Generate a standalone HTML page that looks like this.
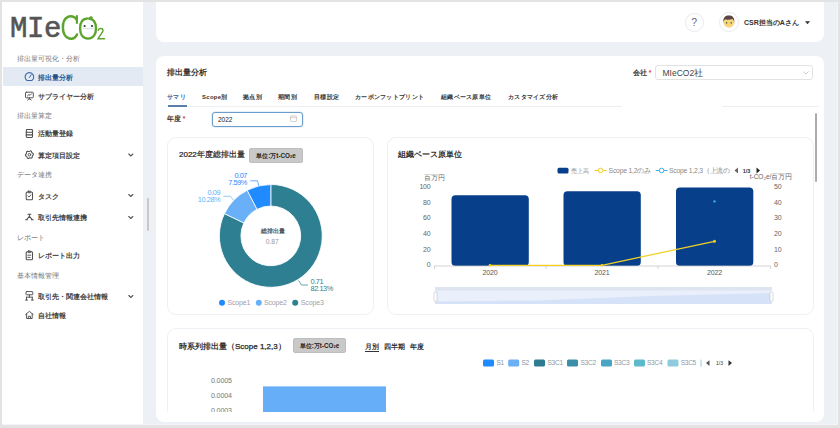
<!DOCTYPE html>
<html><head><meta charset="utf-8">
<style>
*{margin:0;padding:0;box-sizing:border-box}
html,body{width:840px;height:428px;overflow:hidden;background:#edf0f5;font-family:"Liberation Sans",sans-serif;color:#333;position:relative}
.a{position:absolute;white-space:nowrap}
.b{position:absolute}
.sec{position:absolute;left:17px;font-size:6.5px;color:#777;line-height:8px;white-space:nowrap}
.it{position:absolute;left:38px;font-size:7px;color:#444;font-weight:bold;line-height:9px;white-space:nowrap}
.tab{position:absolute;top:92px;font-size:6px;letter-spacing:0.28px;font-weight:bold;color:#333;line-height:8px;white-space:nowrap}
.card{position:absolute;background:#fff;border-radius:8px}
.sub{position:absolute;background:#fff;border:1px solid #eff0f5;border-radius:9px}
.yl{position:absolute;font-size:6.5px;color:#666;line-height:8px;text-align:right;width:30px}
.yr{position:absolute;font-size:6.5px;color:#666;line-height:8px}
.xl{position:absolute;font-size:6.5px;color:#555;line-height:8px;width:30px;text-align:center}
.badge{position:absolute;background:#c9c9c9;border:1px solid #bdbdbd;border-radius:2px;font-size:6.3px;letter-spacing:0px;font-weight:bold;color:#222;line-height:13px;text-align:center;white-space:nowrap}
.lg{position:absolute;font-size:6px;color:#8a9aa8;line-height:8px;white-space:nowrap}
.lr{position:absolute;width:11px;height:7px;border-radius:2px}
</style></head><body>
<!-- sidebar -->
<div class="b" style="left:0;top:0;width:143px;height:428px;background:#fff"></div>
<div class="a" id="logoM" style="left:10px;top:15px;font-family:'Liberation Mono',monospace;font-size:29px;font-weight:normal;-webkit-text-stroke:0.6px #555;color:#555;letter-spacing:-0.4px;line-height:29px">MIe</div>
<svg class="b" style="left:55px;top:10px" width="55" height="34" viewBox="55 10 55 34" fill="none" stroke="#5ea52f" stroke-linecap="round">
  <path d="M76.6 19.5 C74.5 16.3 70.5 15.6 67.5 17.2 C63.8 19.2 62.8 24 62.9 27.8 C63 32.5 64.5 36.8 68.8 38.3 C72.3 39.4 75.5 37.8 77 34.5" stroke-width="2.5"/>
  <path d="M76.9 16 V23" stroke-width="2.2"/>
  <path d="M87 18.5 C82 18.8 80 23.5 80.1 28.8 C80.2 34 82.5 38.6 88 38.6 C93.8 38.6 96 33.6 96 28.3 C96 22.5 93.5 18.3 88.5 18.8 C89.5 18.3 90.8 17.6 91.5 17.5" stroke-width="2.4"/>
  <circle cx="84.6" cy="26" r="1.1" fill="#1f4a2a" stroke="none"/>
  <circle cx="92" cy="26" r="1.1" fill="#1f4a2a" stroke="none"/>
  <path d="M83 28.3 Q84.5 29.3 86 28.3 M86.5 28.3 Q88.3 29.5 90 28.3 M90.5 28.3 Q92 29.3 93.5 28.3" stroke="#9bbfa8" stroke-width="0.5"/>
  <path d="M98.2 30.3 C98.5 28 102.8 27.6 103 30.2 C103.2 32.2 100.5 34.5 98 38.8 H104.5" stroke-width="1.5"/>
</svg>
<svg class="b" style="left:0;top:0;z-index:2" width="143" height="428" viewBox="0 0 143 428" fill="none" stroke="#505050" stroke-width="0.95" stroke-linecap="round" stroke-linejoin="round">
  <!-- gauge -->
  <path d="M27 80.5 A4.3 4.3 0 1 1 31.8 80.5 Z" stroke="#3b6aa6" stroke-width="1.1"/>
  <path d="M29.4 77.5 L31.2 74.8" stroke="#3b6aa6" stroke-width="1"/>
  <!-- presentation -->
  <rect x="25.5" y="92.2" width="7.8" height="5.6" rx="0.8"/>
  <path d="M27.4 96 L29 94.5 L30 95.3 L31.5 93.8"/>
  <path d="M29.4 97.8 V99.2 M27.6 100 L29.4 98.6 L31.2 100"/>
  <!-- doc list -->
  <rect x="26.3" y="129.5" width="6.2" height="8" rx="0.9" stroke-width="1.1"/>
  <path d="M26.3 132.2 H32.5 M26.3 134.9 H32.5" stroke-width="1.1"/>
  <!-- gear -->
  <path d="M33.27 153.67 L33.40 154.71 L32.59 155.56 L32.25 156.36 L32.22 157.53 L31.39 158.17 L30.25 157.89 L29.39 158.00 L28.36 158.56 L27.39 158.16 L27.06 157.03 L26.54 156.34 L25.53 155.73 L25.40 154.69 L26.21 153.84 L26.55 153.04 L26.58 151.87 L27.41 151.23 L28.55 151.51 L29.41 151.40 L30.44 150.84 L31.41 151.24 L31.74 152.37 L32.26 153.06Z" stroke-width="1.05"/>
  <circle cx="29.4" cy="154.7" r="1.3"/>
  <!-- clipboard check -->
  <rect x="26.2" y="192" width="6.3" height="7.8" rx="1" stroke-width="1.05"/>
  <rect x="27.9" y="191.2" width="2.9" height="1.6" rx="0.5"/>
  <path d="M27.8 196 L29 197.1 L30.9 194.9"/>
  <!-- network -->
  <path d="M27.9 214.3 H30.9 M29.4 214.3 V216.4 L26.6 219.6 M29.4 216.4 L32.2 219.6 M25.6 219.7 H27.4 M31.4 219.7 H33.2" stroke-width="1.05"/>
  <!-- report clipboard -->
  <rect x="26.2" y="251.8" width="6.3" height="8" rx="1" stroke-width="1.05"/>
  <rect x="27.9" y="251" width="2.9" height="1.6" rx="0.5"/>
  <path d="M27.8 255.2 H30.8 M27.8 257.4 H30"/>
  <!-- org -->
  <rect x="26" y="291.6" width="6.8" height="3.2" rx="0.5"/>
  <path d="M29.4 294.8 V297.2 M26.5 297.2 H32.3 M26.5 297.2 V300 M32.3 297.2 V300 M25.5 300 H27.5 M31.3 300 H33.3"/>
  <!-- house -->
  <path d="M25.6 314.6 L29.4 311.3 L33.2 314.6 M26.6 313.8 V318.5 H32.2 V313.8"/>
  <path d="M28.3 318.5 V316.3 H30.5 V318.5"/>
  <!-- chevrons -->
  <path d="M128.8 154 L130.8 156 L132.8 154 M128.8 194.5 L130.8 196.5 L132.8 194.5 M128.8 216.5 L130.8 218.5 L132.8 216.5 M128.8 295.5 L130.8 297.5 L132.8 295.5" stroke="#555" stroke-width="1.1"/>
</svg>
<div class="sec" style="top:55px">排出量可視化・分析</div>
<div class="b" style="left:3px;top:67px;width:140px;height:19px;background:#e4eaf3"></div>
<div class="it" style="top:73px;color:#24508c">排出量分析</div>
<div class="it" style="top:92px">サプライヤー分析</div>
<div class="sec" style="top:112px">排出量算定</div>
<div class="it" style="top:129px">活動量登録</div>
<div class="it" style="top:151px">算定項目設定</div>
<div class="sec" style="top:171px">データ連携</div>
<div class="it" style="top:192px">タスク</div>
<div class="it" style="top:213px">取引先情報連携</div>
<div class="sec" style="top:234px">レポート</div>
<div class="it" style="top:251px">レポート出力</div>
<div class="sec" style="top:272px">基本情報管理</div>
<div class="it" style="top:292px">取引先・関連会社情報</div>
<div class="it" style="top:311px">自社情報</div>
<div class="b" style="left:147px;top:198px;width:2px;height:33px;background:#c8c8c8;border-radius:1px"></div>

<!-- header -->
<div class="card" style="left:156px;top:-8px;width:668px;height:50px"></div>
<div class="b" style="left:685px;top:12.5px;width:19px;height:19px;border:1px solid #ebebef;border-radius:50%;background:#fff"></div>
<div class="a" style="left:691.2px;top:16px;font-size:10.5px;color:#6a6a6a;line-height:12px">?</div>
<div class="b" style="left:719px;top:12px;width:19.5px;height:19.5px;border:1px solid #ebebef;border-radius:50%;background:#fff"></div>
<svg class="a" style="left:722px;top:15px" width="14" height="14" viewBox="722 15 14 14">
  <ellipse cx="728.9" cy="22.3" rx="5.6" ry="5.4" fill="#f7d57a"/>
  <path d="M723.4 22 C723 17.5 725.5 15.6 728.8 15.6 C732.3 15.6 734.6 17.5 734.3 22 C733.8 20.5 733.3 19.6 732.3 19 C730 20 727 20 725.2 19.2 C724.3 19.8 723.8 20.8 723.4 22Z" fill="#5b4546"/>
  <ellipse cx="726.6" cy="22.8" rx="0.7" ry="0.9" fill="#4a5a50"/><ellipse cx="731.2" cy="22.8" rx="0.7" ry="0.9" fill="#4a5a50"/>
</svg>
<div class="a" style="left:744px;top:18px;font-size:7px;font-weight:bold;color:#333;line-height:10px">CSR担当のAさん</div>
<svg class="a" style="left:805px;top:21px" width="5" height="4" viewBox="0 0 5 4"><path d="M0 0.3H5L2.5 3.2Z" fill="#333"/></svg>

<!-- main card -->
<div class="card" style="left:156px;top:56px;width:668px;height:366px"></div>
<div class="a" style="left:167px;top:68px;font-size:8px;font-weight:bold;color:#333;line-height:10px">排出量分析</div>
<div class="a" style="left:633px;top:69px;font-size:6.5px;font-weight:bold;color:#333;line-height:8px">会社<span style="color:#e0343a"> *</span></div>
<div class="b" style="left:655px;top:65px;width:158px;height:15px;border:1px solid #e2e2e2;border-radius:3px;background:#fff"></div>
<div class="a" style="left:662.5px;top:68px;font-size:8.5px;color:#444;line-height:10px">MIeCO2社</div>
<svg class="a" style="left:803px;top:71px" width="6" height="4" viewBox="0 0 6 4"><path d="M0.5 0.5L3 3L5.5 0.5" fill="none" stroke="#bbb" stroke-width="0.8"/></svg>

<!-- tabs -->
<div class="b" style="left:167px;top:105.5px;width:454.5px;height:1px;background:#eeeff2"></div><div class="b" style="left:722px;top:105.5px;width:97px;height:1px;background:#eeeff2"></div>
<div class="tab" style="left:167px;top:93px;color:#2a5a9a">サマリ</div>
<div class="b" style="left:167.5px;top:104.5px;width:19px;height:2px;background:#5b7fa8"></div>
<div class="tab" style="left:202px;top:93px">Scope別</div>
<div class="tab" style="left:243px;top:93px">拠点別</div>
<div class="tab" style="left:278px;top:93px">期間別</div>
<div class="tab" style="left:314px;top:93px">目標設定</div>
<div class="tab" style="left:355px;top:93px">カーボンフットプリント</div>
<div class="tab" style="left:441px;top:93px">組織ベース原単位</div>
<div class="tab" style="left:508px;top:93px">カスタマイズ分析</div>

<div class="a" style="left:167px;top:115px;font-size:6.5px;font-weight:bold;color:#333;line-height:8px">年度<span style="color:#e0343a"> *</span></div>
<div class="b" style="left:212px;top:112px;width:91px;height:15px;border:1px solid #6a9ccc;border-radius:3px;background:#fff;box-shadow:0 0 0 0.6px #d6e6f4"></div>
<div class="a" style="left:218px;top:115px;font-size:6.5px;color:#222;line-height:9px">2022</div>
<svg class="a" style="left:290px;top:115px" width="7" height="7" viewBox="0 0 7 7"><rect x="0.5" y="1" width="6" height="5.5" rx="0.8" fill="none" stroke="#bbb" stroke-width="0.7"/><line x1="0.5" y1="2.6" x2="6.5" y2="2.6" stroke="#bbb" stroke-width="0.6"/></svg>

<!-- donut card -->
<div class="sub" style="left:167px;top:137px;width:207px;height:178px"></div>
<div class="a" style="left:179px;top:150px;font-size:8px;color:#222;-webkit-text-stroke:0.2px #222;line-height:10px">2022年度総排出量</div>
<div class="badge" style="left:249px;top:148px;width:54px;height:15px">単位:万t-CO<sub style="font-size:4px;vertical-align:0">2</sub>e</div>

<!-- right chart card -->
<div class="sub" style="left:387px;top:137px;width:427px;height:178px"></div>
<div class="a" style="left:398px;top:150px;font-size:8px;font-weight:bold;color:#333;line-height:10px">組織ベース原単位</div>

<!-- bottom card -->
<div class="b" style="left:167px;top:328px;width:647px;height:84.2px;overflow:hidden">
  <div class="sub" style="left:0;top:0;width:647px;height:120px"></div>
</div>
<div class="a" style="left:179px;top:341.5px;font-size:8px;font-weight:bold;color:#333;line-height:10px">時系列排出量<span style="font-weight:normal;color:#222;-webkit-text-stroke:0.25px #222">（Scope 1,2,3）</span></div>
<div class="badge" style="left:293px;top:338px;width:53px;height:15px">単位:万t-CO<sub style="font-size:4px;vertical-align:0">2</sub>e</div>

<!-- charts overlay -->
<svg class="b" style="left:0;top:0" width="840" height="428" viewBox="0 0 840 428" font-family="Liberation Sans, sans-serif">
  <!-- donut -->
  <path d="M270.80 184.50A51.4 51.4 0 1 1 224.47 213.64L243.85 222.95A29.9 29.9 0 1 0 270.80 206.00Z" fill="#2f7f93" stroke="#fff" stroke-width="0.8" stroke-linejoin="round"/>
  <path d="M224.47 213.64A51.4 51.4 0 0 1 247.21 190.23L257.08 209.34A29.9 29.9 0 0 0 243.85 222.95Z" fill="#6ab0f9" stroke="#fff" stroke-width="0.8" stroke-linejoin="round"/>
  <path d="M247.21 190.23A51.4 51.4 0 0 1 270.80 184.50L270.80 206.00A29.9 29.9 0 0 0 257.08 209.34Z" fill="#1f8bff" stroke="#fff" stroke-width="0.8" stroke-linejoin="round"/>
  <polyline points="258.7,185.8 257.6,180.8 250.3,180.8" fill="none" stroke="#1f8bff" stroke-width="0.7"/>
  <polyline points="233.5,200 230.3,196.3 223.4,196.3" fill="none" stroke="#6ab0f9" stroke-width="0.7"/>
  <polyline points="298.5,280.3 301.5,285 308,285" fill="none" stroke="#2f7f93" stroke-width="0.7"/>
  <g font-size="7.4" text-anchor="end" letter-spacing="-0.45">
    <text x="247" y="178.2" fill="#1f8bff">0.07</text>
    <text x="247" y="185.2" fill="#1f8bff">7.59%</text>
    <text x="220.2" y="194.5" fill="#6ab0f9">0.09</text>
    <text x="220.2" y="201.5" fill="#6ab0f9">10.28%</text>
  </g>
  <g font-size="7.4" letter-spacing="-0.45">
    <text x="310.5" y="284" fill="#2f7f93">0.71</text>
    <text x="310.5" y="290.8" fill="#2f7f93">82.13%</text>
  </g>
  <text x="272.5" y="233" font-size="6.4" font-weight="bold" fill="#555" text-anchor="middle">総排出量</text>
  <text x="272.3" y="243.8" font-size="6.8" fill="#999" text-anchor="middle">0.87</text>
  <!-- donut legend -->
  <circle cx="222" cy="302.7" r="3" fill="#1f8bff"/>
  <circle cx="258.8" cy="302.7" r="3" fill="#6ab0f9"/>
  <circle cx="295.2" cy="302.7" r="3" fill="#2f7f93"/>
  <g font-size="7" fill="#a0a0a6" letter-spacing="-0.15">
    <text x="227.5" y="305.2">Scope1</text>
    <text x="264" y="305.2">Scope2</text>
    <text x="300.8" y="305.2">Scope3</text>
  </g>

  <!-- bar chart -->
  <g font-size="7" fill="#666" text-anchor="end" letter-spacing="-0.2">
    <text x="430.5" y="189.2">100</text>
    <text x="430.5" y="204.8">80</text>
    <text x="430.5" y="220.4">60</text>
    <text x="430.5" y="236">40</text>
    <text x="430.5" y="251.6">20</text>
    <text x="430.5" y="267.3">0</text>
  </g>
  <text x="434" y="180" font-size="6.6" fill="#6a6a6a" text-anchor="middle">百万円</text>
  <g font-size="7" fill="#666" letter-spacing="-0.2">
    <text x="774" y="189.2">50</text>
    <text x="774" y="204.8">40</text>
    <text x="774" y="220.4">30</text>
    <text x="774" y="236">20</text>
    <text x="774" y="251.6">10</text>
    <text x="774" y="267.3">0</text>
  </g>
  <text x="771" y="179" font-size="6.5" fill="#666" text-anchor="middle">t-CO₂e/百万円</text>
  <rect x="451.5" y="195.2" width="77.3" height="70.8" rx="4" fill="#083f8a"/>
  <rect x="563.5" y="191.3" width="77.3" height="74.7" rx="4" fill="#083f8a"/>
  <rect x="676" y="187.6" width="77.3" height="78.4" rx="4" fill="#083f8a"/>
  <line x1="434" y1="266" x2="771" y2="266" stroke="#c8c8c8" stroke-width="0.8"/>
  <g stroke="#c8c8c8" stroke-width="0.8">
    <line x1="434.4" y1="266" x2="434.4" y2="269"/><line x1="546" y1="266" x2="546" y2="269"/>
    <line x1="658" y1="266" x2="658" y2="269"/><line x1="770.6" y1="266" x2="770.6" y2="269"/>
  </g>
  <g font-size="7" fill="#555" text-anchor="middle" letter-spacing="-0.2">
    <text x="490" y="274.8">2020</text><text x="602" y="274.8">2021</text><text x="714.5" y="274.8">2022</text>
  </g>
  <polyline points="490,265.3 602,265.3 714.5,241.3" fill="none" stroke="#f2d024" stroke-width="1.25"/>
  <circle cx="490" cy="265.3" r="1.3" fill="#f2d024"/>
  <circle cx="602" cy="265.3" r="1.3" fill="#f2d024"/>
  <circle cx="714.5" cy="241.3" r="1.5" fill="#f2d024"/>
  <circle cx="714.5" cy="201.4" r="1.2" fill="#3ab0ea"/>
  <!-- bar legend -->
  <rect x="557.5" y="167.8" width="11" height="5.8" rx="1.5" fill="#083f8a"/>
  <text x="570.8" y="172.8" font-size="6.3" fill="#8a8a8a">売上高</text>
  <line x1="594.6" y1="170.5" x2="606.5" y2="170.5" stroke="#f2cf1f" stroke-width="1"/>
  <circle cx="600.6" cy="170.5" r="2.3" fill="#fff" stroke="#f2cf1f" stroke-width="1"/>
  <text x="608.6" y="172.9" font-size="6.8" fill="#8a8a8a" letter-spacing="-0.22">Scope 1,2のみ</text>
  <line x1="655.7" y1="170.5" x2="667.6" y2="170.5" stroke="#3aaee6" stroke-width="1"/>
  <circle cx="661.6" cy="170.5" r="2.3" fill="#fff" stroke="#3aaee6" stroke-width="1"/>
  <text x="669" y="172.9" font-size="6.8" fill="#8a8a8a" letter-spacing="-0.22">Scope 1,2,3（上流の</text>
  <path d="M734.5 170.5L738 167.6V173.4Z" fill="#666"/>
  <text x="746.5" y="172.6" font-size="5.5" font-weight="bold" fill="#333" text-anchor="middle">1/3</text>
  <path d="M760 170.5L756.5 167.6V173.4Z" fill="#222"/>
  <!-- datazoom -->
  <rect x="435" y="287" width="337" height="17" fill="#e9effb"/>
  <rect x="435" y="287" width="337" height="3.5" fill="#dfe5f0"/>
  <path d="M435 301.5 L540 300.5 L650 296 L771.5 293 V304 H435Z" fill="#d6e2f8"/>
  <rect x="434" y="292" width="3" height="9.5" rx="1.3" fill="#fff" stroke="#b8bfcc" stroke-width="0.6"/>
  <rect x="770" y="292" width="3" height="9.5" rx="1.3" fill="#fff" stroke="#b8bfcc" stroke-width="0.6"/>

  <!-- bottom chart -->
  <g font-size="7.1" fill="#777" text-anchor="end" letter-spacing="-0.15">
    <text x="231.8" y="382.5">0.0005</text>
    <text x="231.8" y="397.9">0.0004</text>
    <text x="231.8" y="413.4">0.0003</text>
  </g>
  <rect x="263" y="386.4" width="123" height="30" fill="#67aef9"/>
  <g font-size="6.6" fill="#8a9aa8" letter-spacing="-0.3">
    <rect x="483" y="359.6" width="11" height="7" rx="1.5" fill="#1f8bff"/><text x="496.5" y="365.4">S1</text>
    <rect x="508.2" y="359.6" width="11" height="7" rx="1.5" fill="#6ab0f5"/><text x="521.5" y="365.4">S2</text>
    <rect x="534" y="359.6" width="11" height="7" rx="1.5" fill="#2e7b92"/><text x="547.5" y="365.4">S3C1</text>
    <rect x="567" y="359.6" width="11" height="7" rx="1.5" fill="#3a8ea8"/><text x="580.5" y="365.4">S3C2</text>
    <rect x="601" y="359.6" width="11" height="7" rx="1.5" fill="#4aa5c2"/><text x="614" y="365.4">S3C3</text>
    <rect x="634" y="359.6" width="11" height="7" rx="1.5" fill="#5dbacd"/><text x="647" y="365.4">S3C4</text>
    <rect x="667.5" y="359.6" width="11" height="7" rx="1.5" fill="#8fcbdc"/><text x="680.7" y="365.4">S3C5</text>
    <rect x="700.5" y="359.6" width="1" height="7" fill="#8fcbdc"/>
  </g>
  <path d="M706 363.1L709.5 360.3V365.9Z" fill="#555"/>
  <text x="719.5" y="365.2" font-size="5" fill="#333" text-anchor="middle">1/3</text>
  <path d="M732 363.1L728.5 360.3V365.9Z" fill="#333"/>
</svg>
<div class="a" style="left:365px;top:342px;font-size:7px;font-weight:bold;color:#333;line-height:9px;border-bottom:1px solid #333">月別</div>
<div class="a" style="left:384px;top:342px;font-size:7px;font-weight:bold;color:#333;line-height:9px">四半期</div>
<div class="a" style="left:410px;top:342px;font-size:7px;font-weight:bold;color:#333;line-height:9px">年度</div>
<!-- bottom clip cover -->
<div class="b" style="left:166px;top:412.2px;width:648px;height:9px;background:#fff"></div>

<!-- main scrollbar -->
<div class="b" style="left:815px;top:112.5px;width:2.2px;height:69px;background:#acacac;border-radius:1.1px"></div>

<!-- frame borders -->
<div class="b" style="left:0;top:424px;width:840px;height:1px;background:#f3f5f8;z-index:8"></div>
<div class="b" style="left:837px;top:0;width:1px;height:428px;background:#f3f5f8;z-index:8"></div>
<div class="b" style="left:0;top:0;width:840px;height:2px;background:#e3e3e3;z-index:9"></div>
<div class="b" style="left:0;top:0;width:2px;height:428px;background:#e3e3e3;z-index:9"></div>
<div class="b" style="left:838px;top:0;width:2px;height:428px;background:#e3e3e3;z-index:9"></div>
<div class="b" style="left:0;top:425px;width:840px;height:3px;background:#e3e3e3;z-index:9"></div>
</body></html>
